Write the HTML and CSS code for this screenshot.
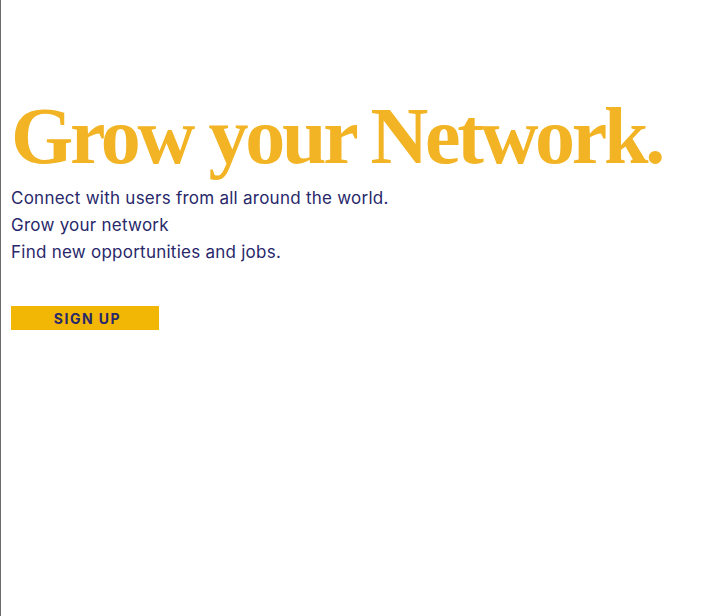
FILE: index.html
```html
<!DOCTYPE html>
<html lang="en">
<head>
<meta charset="utf-8">
<title>Grow your Network</title>
<link rel="stylesheet" href="styles.css">
</head>
<body>
<main class="hero">
  <h1 class="hero-title">Grow your Network.</h1>
  <p class="hero-text">Connect with users from all around the world.<br>Grow your network<br>Find new opportunities and jobs.</p>
  <a class="hero-btn" href="#">SIGN UP</a>
</main>
</body>
</html>
```
FILE: styles.css
```css
html, body {
  margin: 0;
  padding: 0;
  background: #ffffff;
}
body {
  min-height: 616px;
  border-left: 1px solid #6b6b6b;
  box-sizing: border-box;
}
.hero {
  padding: 88px 0 0 10px;
  display: flex;
  flex-direction: column;
  align-items: flex-start;
}
.hero-title {
  margin: 0;
  font-family: "Liberation Serif", "Times New Roman", serif;
  font-weight: 700;
  font-size: 80px;
  line-height: 96px;
  letter-spacing: -3.3px;
  color: #f2b424;
}
.hero-text {
  margin: 1px 0 0;
  font-family: Inter, "Noto Sans", sans-serif;
  font-size: 17px;
  line-height: 27px;
  letter-spacing: 0.25px;
  color: #28286a;
}
.hero-btn {
  margin-top: 40px;
  width: 148px;
  height: 24px;
  box-sizing: border-box;
  padding-left: 5px;
  display: flex;
  align-items: center;
  justify-content: center;
  background: #f2b705;
  color: #28286a;
  font-family: Inter, "Noto Sans", sans-serif;
  font-weight: 700;
  font-size: 14px;
  letter-spacing: 1.5px;
  text-decoration: none;
}
```
